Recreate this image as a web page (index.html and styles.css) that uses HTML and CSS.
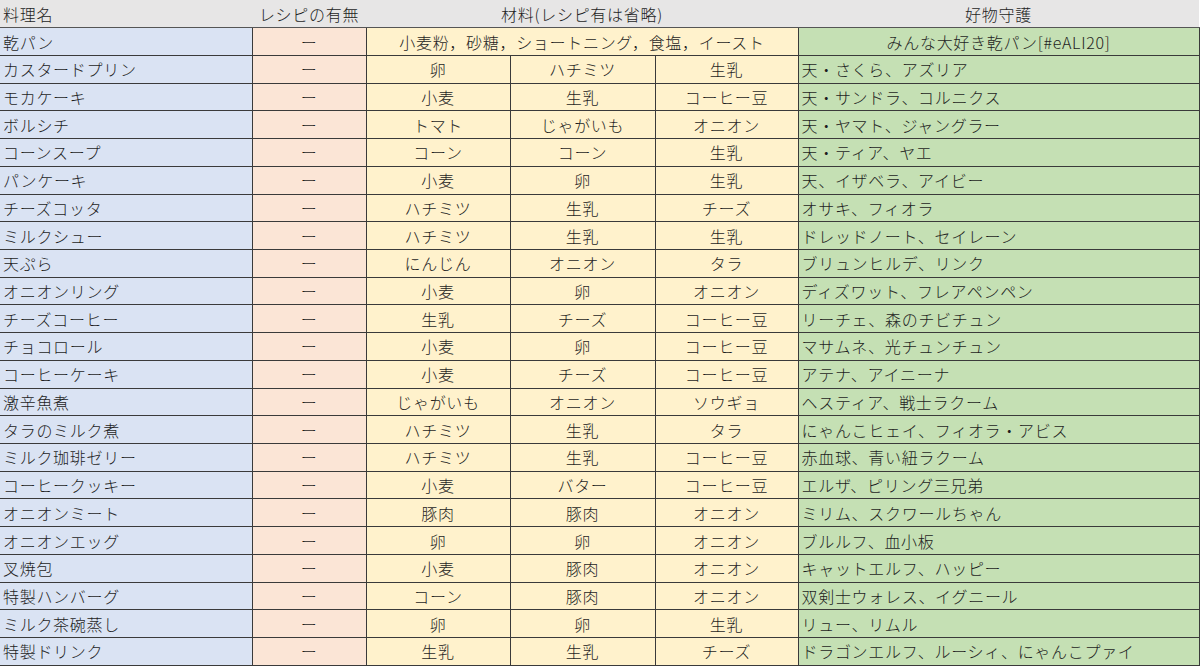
FILE: index.html
```html
<!DOCTYPE html>
<html lang="ja">
<head>
<meta charset="utf-8">
<title>好物表</title>
<link rel="stylesheet" href="styles.css">
</head>
<body>
<table class="sheet">
  <colgroup>
    <col class="c-name"><col class="c-recipe"><col class="c-mat"><col class="c-mat2"><col class="c-mat3"><col class="c-guard">
  </colgroup>
  <thead>
    <tr>
      <th class="left">料理名</th>
      <th>レシピの有無</th>
      <th colspan="3">材料(レシピ有は省略)</th>
      <th>好物守護</th>
    </tr>
  </thead>
  <tbody>
    <tr><td class="name">乾パン</td><td class="recipe">ー</td><td class="mat" colspan="3">小麦粉，砂糖，ショートニング，食塩，イースト</td><td class="guard center">みんな大好き乾パン[#eALI20]</td></tr>
    <tr><td class="name">カスタードプリン</td><td class="recipe">ー</td><td class="mat">卵</td><td class="mat">ハチミツ</td><td class="mat">生乳</td><td class="guard">天・さくら、アズリア</td></tr>
    <tr><td class="name">モカケーキ</td><td class="recipe">ー</td><td class="mat">小麦</td><td class="mat">生乳</td><td class="mat">コーヒー豆</td><td class="guard">天・サンドラ、コルニクス</td></tr>
    <tr><td class="name">ボルシチ</td><td class="recipe">ー</td><td class="mat">トマト</td><td class="mat">じゃがいも</td><td class="mat">オニオン</td><td class="guard">天・ヤマト、ジャングラー</td></tr>
    <tr><td class="name">コーンスープ</td><td class="recipe">ー</td><td class="mat">コーン</td><td class="mat">コーン</td><td class="mat">生乳</td><td class="guard">天・ティア、ヤエ</td></tr>
    <tr><td class="name">パンケーキ</td><td class="recipe">ー</td><td class="mat">小麦</td><td class="mat">卵</td><td class="mat">生乳</td><td class="guard">天、イザベラ、アイビー</td></tr>
    <tr><td class="name">チーズコッタ</td><td class="recipe">ー</td><td class="mat">ハチミツ</td><td class="mat">生乳</td><td class="mat">チーズ</td><td class="guard">オサキ、フィオラ</td></tr>
    <tr><td class="name">ミルクシュー</td><td class="recipe">ー</td><td class="mat">ハチミツ</td><td class="mat">生乳</td><td class="mat">生乳</td><td class="guard">ドレッドノート、セイレーン</td></tr>
    <tr><td class="name">天ぷら</td><td class="recipe">ー</td><td class="mat">にんじん</td><td class="mat">オニオン</td><td class="mat">タラ</td><td class="guard">ブリュンヒルデ、リンク</td></tr>
    <tr><td class="name">オニオンリング</td><td class="recipe">ー</td><td class="mat">小麦</td><td class="mat">卵</td><td class="mat">オニオン</td><td class="guard">ディズワット、フレアペンペン</td></tr>
    <tr><td class="name">チーズコーヒー</td><td class="recipe">ー</td><td class="mat">生乳</td><td class="mat">チーズ</td><td class="mat">コーヒー豆</td><td class="guard">リーチェ、森のチビチュン</td></tr>
    <tr><td class="name">チョコロール</td><td class="recipe">ー</td><td class="mat">小麦</td><td class="mat">卵</td><td class="mat">コーヒー豆</td><td class="guard">マサムネ、光チュンチュン</td></tr>
    <tr><td class="name">コーヒーケーキ</td><td class="recipe">ー</td><td class="mat">小麦</td><td class="mat">チーズ</td><td class="mat">コーヒー豆</td><td class="guard">アテナ、アイニーナ</td></tr>
    <tr><td class="name">激辛魚煮</td><td class="recipe">ー</td><td class="mat">じゃがいも</td><td class="mat">オニオン</td><td class="mat">ソウギョ</td><td class="guard">ヘスティア、戦士ラクーム</td></tr>
    <tr><td class="name">タラのミルク煮</td><td class="recipe">ー</td><td class="mat">ハチミツ</td><td class="mat">生乳</td><td class="mat">タラ</td><td class="guard">にゃんこヒェイ、フィオラ・アビス</td></tr>
    <tr><td class="name">ミルク珈琲ゼリー</td><td class="recipe">ー</td><td class="mat">ハチミツ</td><td class="mat">生乳</td><td class="mat">コーヒー豆</td><td class="guard">赤血球、青い紐ラクーム</td></tr>
    <tr><td class="name">コーヒークッキー</td><td class="recipe">ー</td><td class="mat">小麦</td><td class="mat">バター</td><td class="mat">コーヒー豆</td><td class="guard">エルザ、ピリング三兄弟</td></tr>
    <tr><td class="name">オニオンミート</td><td class="recipe">ー</td><td class="mat">豚肉</td><td class="mat">豚肉</td><td class="mat">オニオン</td><td class="guard">ミリム、スクワールちゃん</td></tr>
    <tr><td class="name">オニオンエッグ</td><td class="recipe">ー</td><td class="mat">卵</td><td class="mat">卵</td><td class="mat">オニオン</td><td class="guard">ブルルフ、血小板</td></tr>
    <tr><td class="name">叉焼包</td><td class="recipe">ー</td><td class="mat">小麦</td><td class="mat">豚肉</td><td class="mat">オニオン</td><td class="guard">キャットエルフ、ハッピー</td></tr>
    <tr><td class="name">特製ハンバーグ</td><td class="recipe">ー</td><td class="mat">コーン</td><td class="mat">豚肉</td><td class="mat">オニオン</td><td class="guard">双剣士ウォレス、イグニール</td></tr>
    <tr><td class="name">ミルク茶碗蒸し</td><td class="recipe">ー</td><td class="mat">卵</td><td class="mat">卵</td><td class="mat">生乳</td><td class="guard">リュー、リムル</td></tr>
    <tr><td class="name">特製ドリンク</td><td class="recipe">ー</td><td class="mat">生乳</td><td class="mat">生乳</td><td class="mat">チーズ</td><td class="guard">ドラゴンエルフ、ルーシィ、にゃんこプァイ</td></tr>
  </tbody>
</table>
</body>
</html>
```

FILE: styles.css
```css
html, body {
  margin: 0;
  padding: 0;
  background: #ffffff;
}

body {
  font-family: "Noto Sans CJK JP", "Noto Sans", sans-serif;
  font-size: 16px;
  font-weight: 300;
  color: #1e1e1e;
}

.sheet {
  width: 1199px;
  border-collapse: collapse;
  table-layout: fixed;
}

.c-name { width: 252px; }
.c-recipe { width: 114px; }
.c-mat { width: 144px; }
.c-mat2 { width: 145px; }
.c-mat3 { width: 143px; }
.c-guard { width: 401px; }

.sheet tr {
  height: 27.72px;
}

.sheet th {
  background: #e7e6e6;
  font-weight: 300;
  text-align: center;
  padding: 0 3px;
  border-bottom: 1px solid #555555;
  letter-spacing: 0.7px;
  line-height: 20px;
  white-space: nowrap;
}

.sheet th.left {
  text-align: left;
}

.sheet td {
  border: 1px solid #3a3a3a;
  padding: 0 3px;
  line-height: 20px;
  letter-spacing: 0.7px;
  white-space: nowrap;
  overflow: hidden;
}

.sheet td:first-child {
  border-left: none;
}

.name {
  background: #dae3f3;
  text-align: left;
}

.recipe {
  background: #fbe5d6;
  text-align: center;
}

.mat {
  background: #fff2cc;
  text-align: center;
}

.guard {
  background: #c5e0b4;
  text-align: left;
}

.guard.center {
  text-align: center;
}
```
